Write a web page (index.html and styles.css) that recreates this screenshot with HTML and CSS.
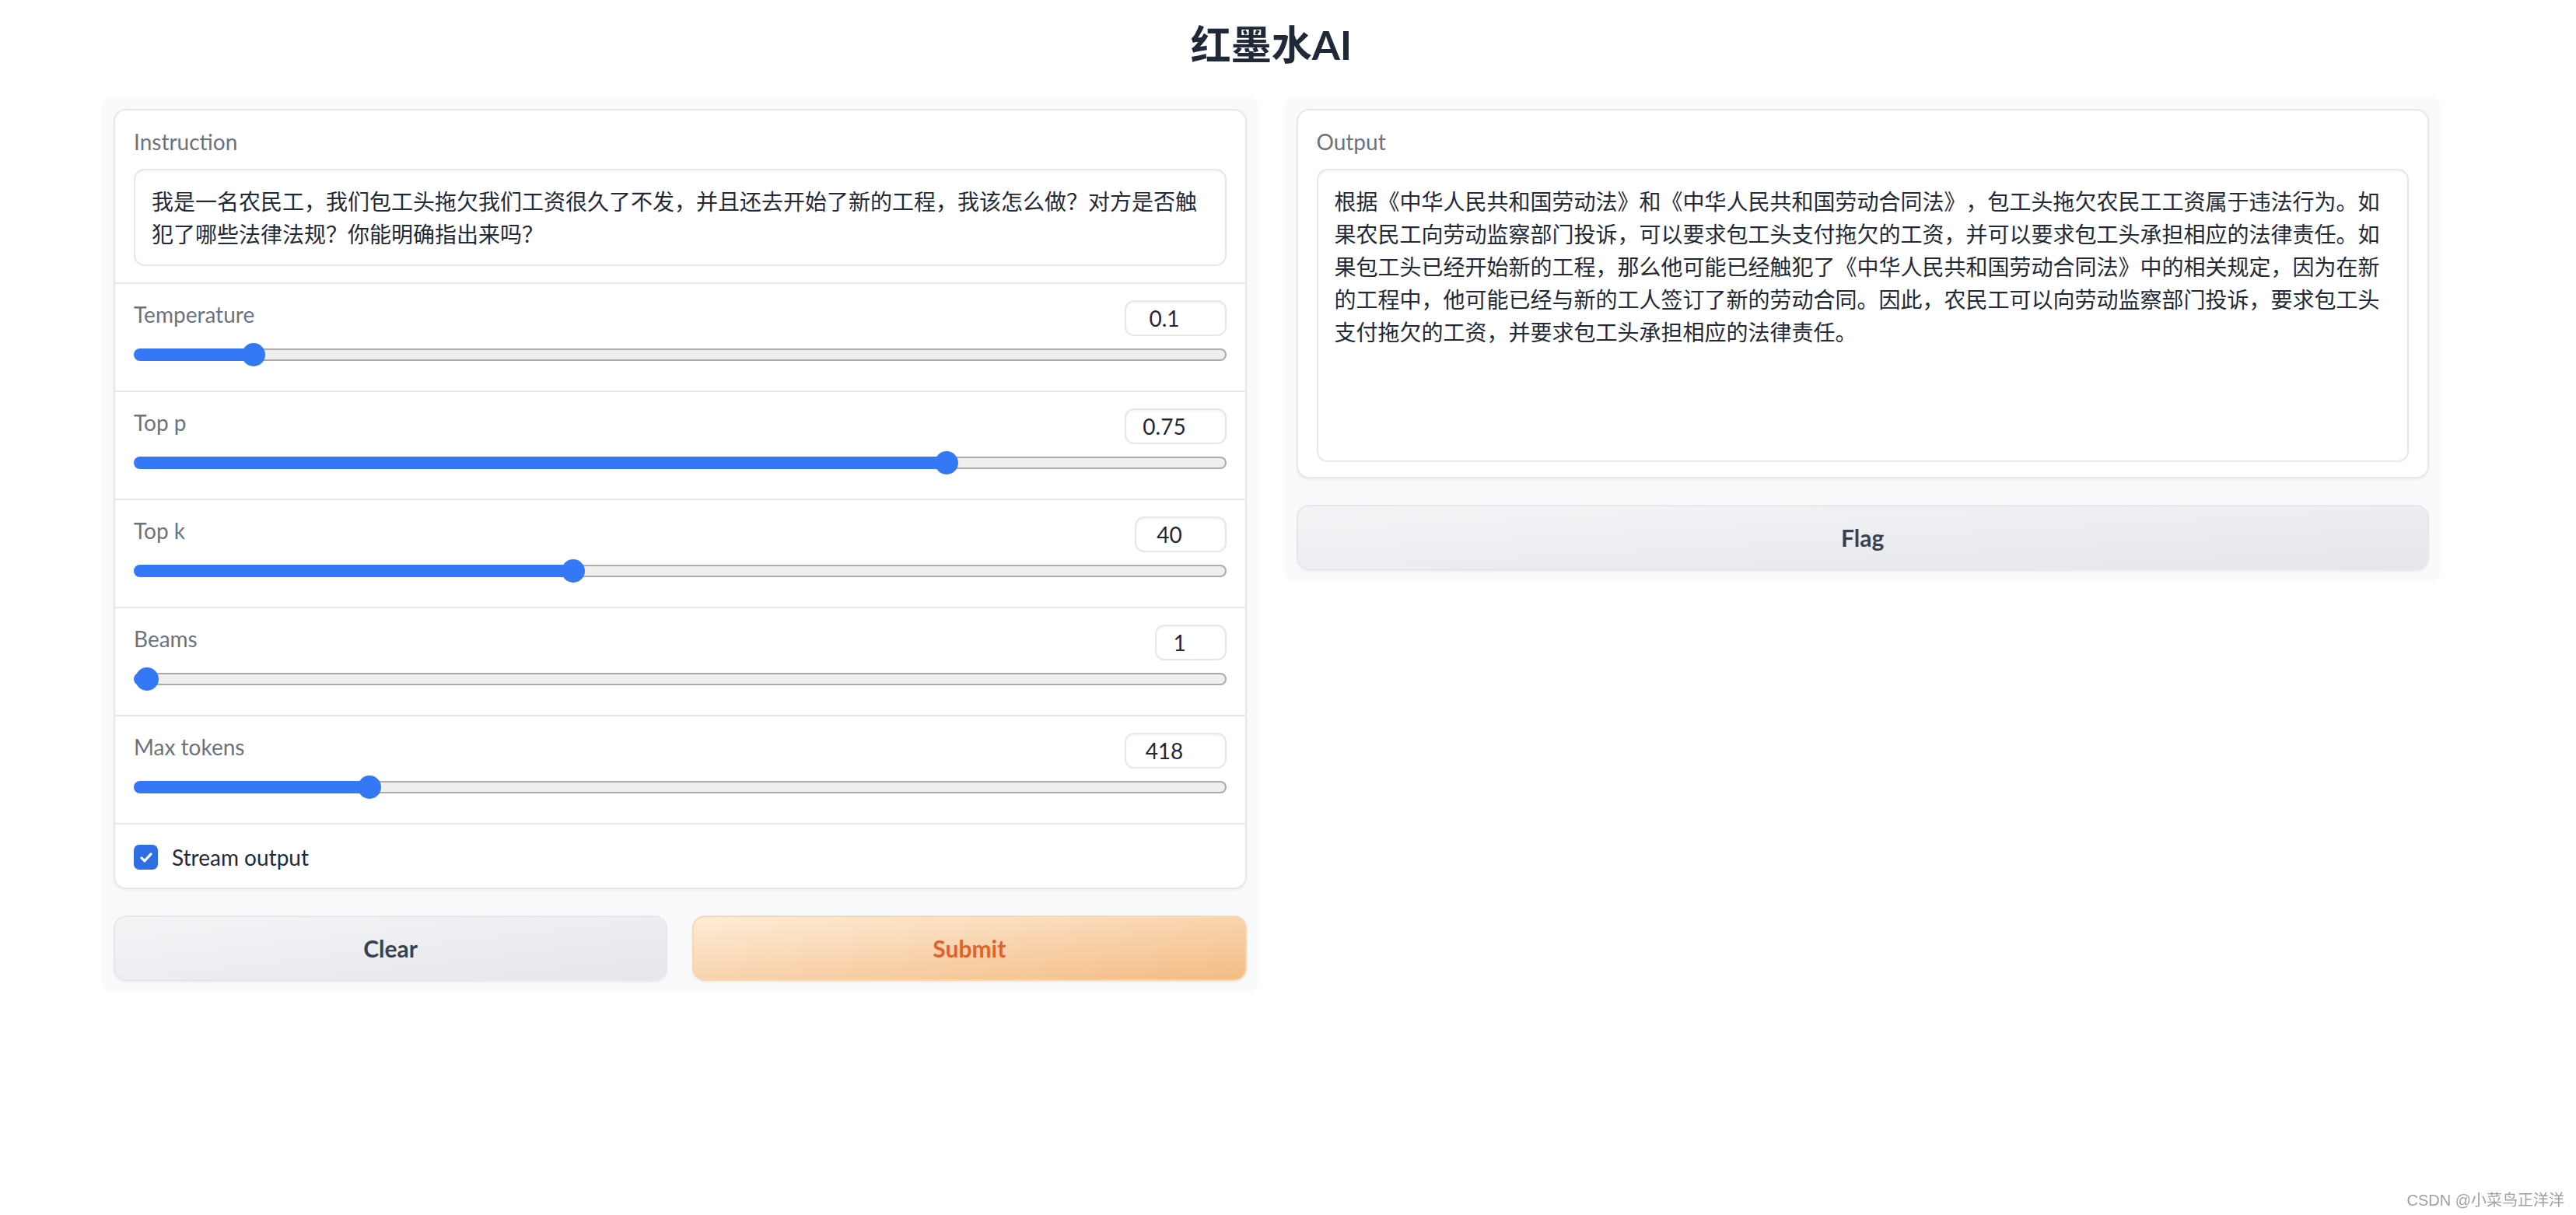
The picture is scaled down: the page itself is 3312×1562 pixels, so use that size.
FILE: index.html
```html
<!DOCTYPE html>
<html lang="zh-CN">
<head>
<meta charset="utf-8">
<title>红墨水AI</title>
<link rel="stylesheet" href="styles.css">
</head>
<body>
<div class="app">
  <h1 class="title">红墨水AI</h1>
  <div class="row">
    <div class="panel">
      <div class="card">
        <div class="block">
          <label class="label" for="instruction">Instruction</label>
          <textarea id="instruction" class="textbox textbox-in" readonly>我是一名农民工，我们包工头拖欠我们工资很久了不发，并且还去开始了新的工程，我该怎么做？对方是否触犯了哪些法律法规？你能明确指出来吗？</textarea>
        </div>
        <div class="block slider-block">
          <div class="slider-head"><span class="label">Temperature</span><input class="num" type="number" value="0.1"></div>
          <input class="range" type="range" min="0" max="1" step="0.01" value="0.1" style="--v:0.1">
        </div>
        <div class="block slider-block">
          <div class="slider-head"><span class="label">Top p</span><input class="num" type="number" value="0.75"></div>
          <input class="range" type="range" min="0" max="1" step="0.01" value="0.75" style="--v:0.75">
        </div>
        <div class="block slider-block">
          <div class="slider-head"><span class="label">Top k</span><input class="num num-md" type="number" value="40"></div>
          <input class="range" type="range" min="0" max="100" step="1" value="40" style="--v:0.4">
        </div>
        <div class="block slider-block">
          <div class="slider-head"><span class="label">Beams</span><input class="num num-sm" type="number" value="1"></div>
          <input class="range" type="range" min="1" max="4" step="1" value="1" style="--v:0">
        </div>
        <div class="block slider-block">
          <div class="slider-head"><span class="label">Max tokens</span><input class="num" type="number" value="418"></div>
          <input class="range" type="range" min="0" max="2000" step="1" value="418" style="--v:0.209">
        </div>
        <div class="block check-block">
          <label class="check">
            <span class="box"><svg viewBox="0 0 16 16" width="22" height="22"><path d="M3.6 8.6l2.9 2.9 5.9-6.5" fill="none" stroke="#fff" stroke-width="2.3" stroke-linecap="round" stroke-linejoin="round"/></svg></span>
            <span class="check-text">Stream output</span>
          </label>
        </div>
      </div>
      <div class="btns">
        <button class="btn btn-secondary">Clear</button>
        <button class="btn btn-primary">Submit</button>
      </div>
    </div>
    <div class="panel">
      <div class="card">
        <div class="block out-block">
          <label class="label" for="output">Output</label>
          <textarea id="output" class="textbox textbox-out" readonly>根据《中华人民共和国劳动法》和《中华人民共和国劳动合同法》，包工头拖欠农民工工资属于违法行为。如果农民工向劳动监察部门投诉，可以要求包工头支付拖欠的工资，并可以要求包工头承担相应的法律责任。如果包工头已经开始新的工程，那么他可能已经触犯了《中华人民共和国劳动合同法》中的相关规定，因为在新的工程中，他可能已经与新的工人签订了新的劳动合同。因此，农民工可以向劳动监察部门投诉，要求包工头支付拖欠的工资，并要求包工头承担相应的法律责任。</textarea>
        </div>
      </div>
      <div class="btns">
        <button class="btn btn-secondary">Flag</button>
      </div>
    </div>
  </div>
</div>
<div class="watermark">CSDN @小菜鸟正洋洋</div>
</body>
</html>
```
FILE: styles.css
```css
* { box-sizing: border-box; }

body {
  margin: 0;
  background: #ffffff;
  font-family: "Lato", "Noto Sans CJK SC", sans-serif;
  color: #1f2937;
  min-height: 1562px;
  text-spacing-trim: space-all;
}

.app {
  width: 3009px;
  margin-left: 130px;
}

.title {
  margin: 19px 0 29px;
  text-align: center;
  font-family: "Lato", "Noto Sans CJK SC", sans-serif;
  font-size: 52px;
  line-height: 76px;
  font-weight: 700;
  color: #1f2937;
}

.row {
  display: flex;
  gap: 32px;
  align-items: flex-start;
}

.panel {
  flex: 1 1 0;
  min-width: 0;
  background: #f9fafb;
  border-radius: 16px;
  padding: 16px 16px 15px;
  display: flex;
  flex-direction: column;
  gap: 34px;
}

.card {
  background: #ffffff;
  border: 2px solid #e5e7eb;
  border-radius: 16px;
  box-shadow: 0 2px 3px rgba(0, 0, 0, 0.05);
  overflow: hidden;
}

.block {
  padding: 22px 24px 21px;
  display: flex;
  flex-direction: column;
}

.block + .block {
  border-top: 2px solid #e5e7eb;
}

.label {
  display: block;
  font-size: 28px;
  line-height: 36px;
  color: #6b7280;
}

.textbox {
  display: block;
  width: 100%;
  margin: 17px 0 0;
  border: 2px solid #e5e7eb;
  border-radius: 14px;
  background: #ffffff;
  box-shadow: inset 0 2px 3px rgba(0, 0, 0, 0.04);
  padding: 19px 21px 14px;
  font-family: "Lato", "Noto Sans CJK SC", sans-serif;
  font-size: 28px;
  line-height: 42px;
  color: #1f2937;
  resize: none;
  overflow: hidden;
  outline: none;
  text-spacing-trim: space-all;
}

.textbox-in { height: 125px; }
.textbox-out { height: 377px; }

.out-block { padding-bottom: 19px; }

.slider-block {
  padding: 21px 24px 31px;
}

.slider-head {
  display: flex;
  justify-content: space-between;
  align-items: flex-start;
  height: 46px;
}

.num {
  width: 131px;
  height: 46px;
  border: 2px solid #e5e7eb;
  border-radius: 12px;
  background: #ffffff;
  box-shadow: inset 0 2px 3px rgba(0, 0, 0, 0.04);
  padding: 0 28px 0 0;
  font-family: "Lato", sans-serif;
  font-size: 28px;
  color: #1f2937;
  text-align: center;
  outline: none;
  -moz-appearance: textfield;
}

.num::-webkit-inner-spin-button,
.num::-webkit-outer-spin-button {
  -webkit-appearance: none;
  margin: 0;
}

.num-md { width: 118px; }
.num-sm { width: 92px; }

.range {
  -webkit-appearance: none;
  appearance: none;
  display: block;
  width: 100%;
  height: 30px;
  margin: 9px 0 0;
  background: transparent;
  --fill: calc(17px + var(--v) * (100% - 34px));
}

.range::-webkit-slider-runnable-track {
  box-sizing: border-box;
  height: 16px;
  border-radius: 8px;
  border: 2px solid transparent;
  background:
    linear-gradient(to right, #3478f6 0, #3478f6 var(--fill), transparent var(--fill)) border-box,
    linear-gradient(#efefef, #efefef) padding-box,
    linear-gradient(#ababab, #ababab) border-box;
}

.range::-webkit-slider-thumb {
  -webkit-appearance: none;
  appearance: none;
  width: 30px;
  height: 30px;
  margin-top: -9px;
  border: none;
  border-radius: 50%;
  background: #3478f6;
}

.check-block {
  padding: 26px 24px 23px;
}

.check {
  display: flex;
  align-items: center;
  gap: 18px;
  height: 32px;
}

.box {
  width: 31px;
  height: 32px;
  border-radius: 7px;
  background: #306fe3;
  display: flex;
  align-items: center;
  justify-content: center;
}

.box svg { display: block; }

.check-text {
  font-size: 28px;
  line-height: 36px;
  color: #1f2937;
}

.btns {
  display: flex;
  gap: 32px;
}

.btn {
  flex: 1 1 0;
  height: 84px;
  border-radius: 16px;
  border: 2px solid #e5e7eb;
  font-family: "Lato", sans-serif;
  font-size: 30px;
  font-weight: 700;
  cursor: pointer;
  box-shadow: 0 2px 3px rgba(0, 0, 0, 0.05);
}

.btn-secondary {
  background: linear-gradient(to bottom right, #f3f4f6, #e5e7eb);
  color: #374151;
}

.btn-primary {
  background: linear-gradient(to bottom right, #fdecd7, #f4bc84);
  border-color: #f9d6ad;
  color: #e4622a;
}

.watermark {
  position: fixed;
  right: 15px;
  bottom: 7px;
  font-family: "Liberation Sans", "Noto Sans CJK SC", sans-serif;
  font-size: 20px;
  line-height: 24px;
  color: #a0a0a0;
}
```
